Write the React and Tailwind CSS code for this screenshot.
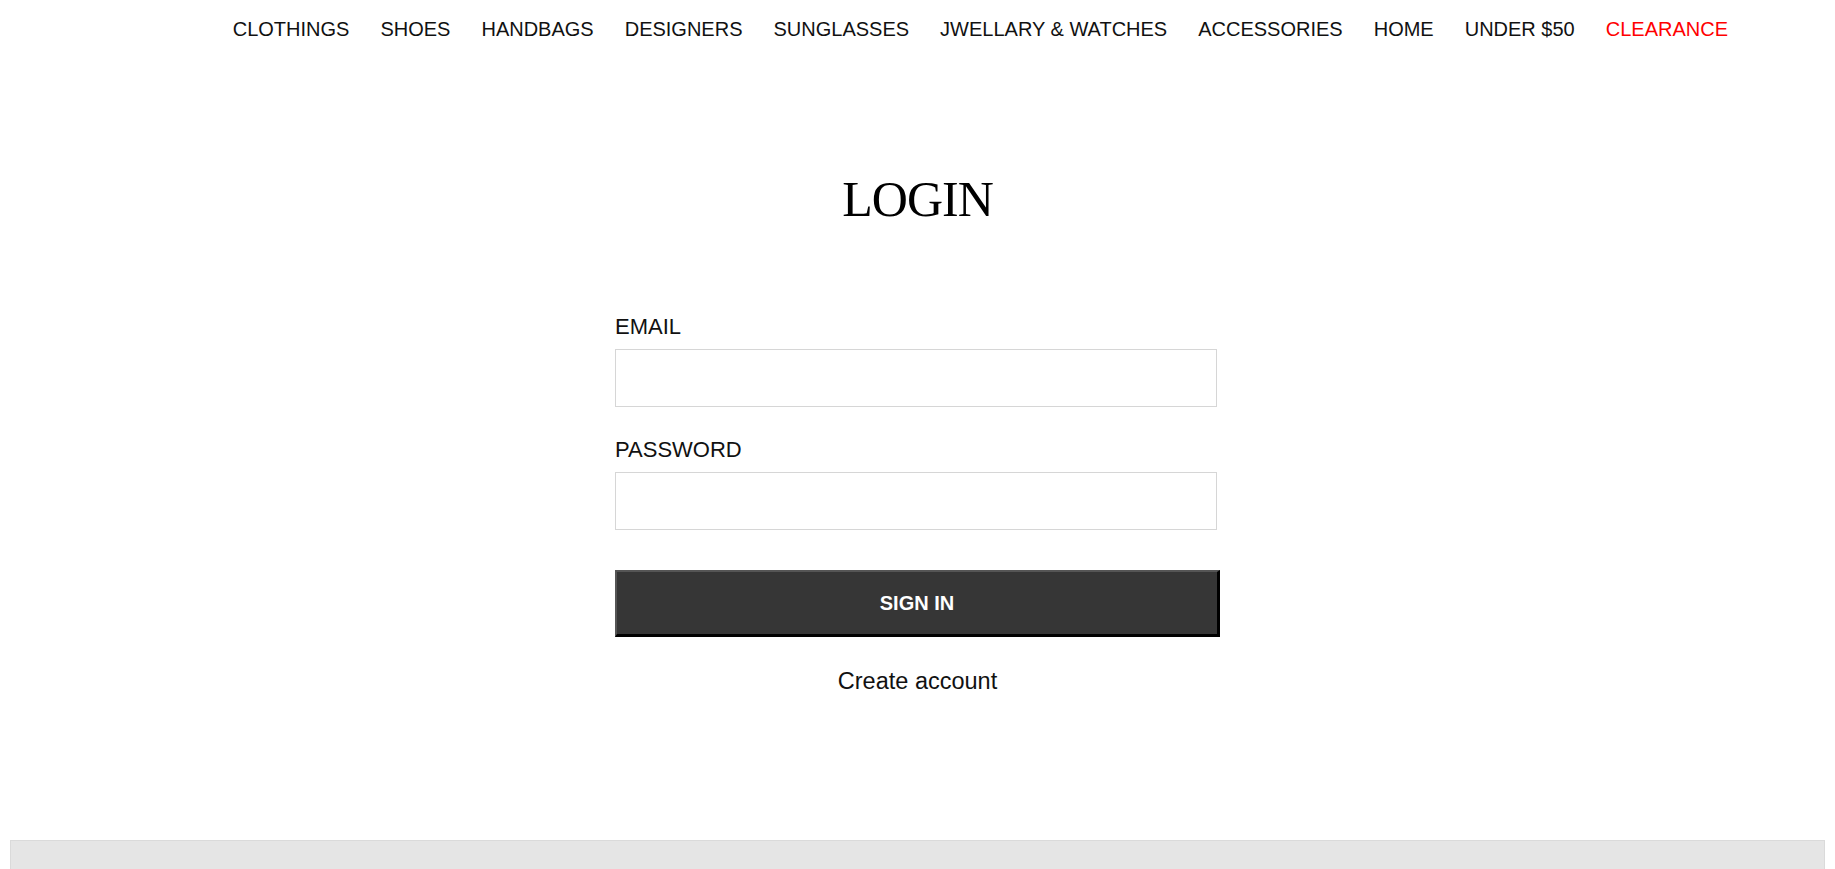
import React from "react";

const NAV = [
  "CLOTHINGS",
  "SHOES",
  "HANDBAGS",
  "DESIGNERS",
  "SUNGLASSES",
  "JWELLARY & WATCHES",
  "ACCESSORIES",
  "HOME",
  "UNDER $50",
];

export default function App() {
  return (
    <div className="min-h-screen bg-white text-[#111] font-['Liberation_Sans',Arial,sans-serif] overflow-hidden">
      {/* NAV */}
      <nav className="flex justify-end gap-[31px] pr-[107px] pt-[15px] text-[20px] leading-[28px] whitespace-nowrap">
        {NAV.map((item) => (
          <a key={item} href="#" className="text-[#111]">
            {item}
          </a>
        ))}
        <a href="#" className="text-[#ff0000]">CLEARANCE</a>
      </nav>

      {/* LOGIN */}
      <main className="flex flex-col items-center">
        <h1 className="mt-[131px] text-[50px] leading-[50px] tracking-[-1px] font-normal font-['Liberation_Serif','Times_New_Roman',serif] text-black">
          LOGIN
        </h1>

        <form className="w-[605px] mt-[91px] flex flex-col" onSubmit={(e) => e.preventDefault()}>
          <label className="text-[22px] leading-[24px] mb-[10px]">EMAIL</label>
          <input
            type="email"
            className="w-[602px] h-[58px] border border-[#d6d6d6] outline-none px-3"
          />

          <label className="text-[22px] leading-[24px] mb-[10px] mt-[31px]">PASSWORD</label>
          <input
            type="password"
            className="w-[602px] h-[58px] border border-[#d6d6d6] outline-none px-3"
          />

          <button
            type="submit"
            className="mt-[40px] h-[67px] w-full bg-[#363636] border-t-2 border-l-2 border-r-[3px] border-b-[3px] border-t-[#555] border-l-[#555] border-r-black border-b-black text-white font-bold text-[20px]"
          >
            SIGN IN
          </button>

          <a href="#" className="mt-[30px] self-center text-[23.5px] leading-[28px] text-[#111]">
            Create account
          </a>
        </form>
      </main>

      {/* FOOTER */}
      <footer className="mx-[10px] mt-[145px] h-[60px] bg-[#e5e5e5] border border-[#dadada]" />
    </div>
  );
}
